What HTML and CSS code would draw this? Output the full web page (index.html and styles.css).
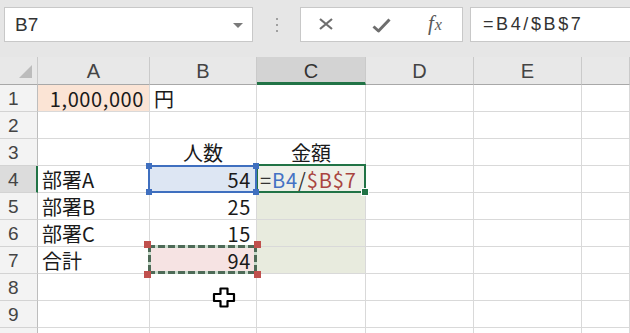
FILE: index.html
```html
<!DOCTYPE html>
<html lang="ja">
<head>
<meta charset="utf-8">
<link rel="stylesheet" href="styles.css">
</head>
<body>
<div class="toolbar">
  <div class="namebox"><span class="name">B7</span><span class="caret"></span></div>
  <div class="grip"><i></i><i></i><i></i></div>
  <div class="fbtns">
    <svg class="ic-x" width="16" height="12" viewBox="0 0 16 12"><path d="M2 1 L14 11 M14 1 L2 11" stroke="#6e6e6e" stroke-width="2.2" fill="none"/></svg>
    <svg class="ic-ok" width="19" height="15" viewBox="0 0 19 15"><path d="M1.5 8.5 L6.5 13 L17.5 1.5" stroke="#6e6e6e" stroke-width="3" fill="none" stroke-linejoin="round"/></svg>
    <span class="fx">f<span class="fx-x">x</span></span>
  </div>
  <div class="formula">=B4/$B$7</div>
</div>
<div class="sheet">
  <div class="c h corner"><span class="tri"></span></div>
  <div class="c h">A</div><div class="c h">B</div><div class="c h hsel">C</div><div class="c h">D</div><div class="c h">E</div><div class="c h"></div>

  <div class="c rh">1</div><div class="c r peach">1,000,000</div><div class="c">円</div><div class="c"></div><div class="c"></div><div class="c"></div><div class="c"></div>
  <div class="c rh">2</div><div class="c"></div><div class="c"></div><div class="c"></div><div class="c"></div><div class="c"></div><div class="c"></div>
  <div class="c rh">3</div><div class="c"></div><div class="c m">人数</div><div class="c m">金額</div><div class="c"></div><div class="c"></div><div class="c"></div>
  <div class="c rh rsel">4</div><div class="c">部署A</div>
  <div class="c r blue">54<span class="ref-blue"><i class="hd tl"></i><i class="hd tr"></i><i class="hd bl"></i><i class="hd br"></i></span></div>
  <div class="c tint active"><span class="f-eq">=</span><span class="f-b">B4</span><span class="f-eq">/</span><span class="f-r">$B$7</span><span class="act-box"><i class="fill"></i></span></div>
  <div class="c"></div><div class="c"></div><div class="c"></div>
  <div class="c rh">5</div><div class="c">部署B</div><div class="c r">25</div><div class="c tint"></div><div class="c"></div><div class="c"></div><div class="c"></div>
  <div class="c rh">6</div><div class="c">部署C</div><div class="c r">15</div><div class="c tint"></div><div class="c"></div><div class="c"></div><div class="c"></div>
  <div class="c rh">7</div><div class="c">合計</div>
  <div class="c r pink">94<span class="ants"><i class="hd rd tl"></i><i class="hd rd tr"></i><i class="hd rd bl"></i><i class="hd rd br"></i></span></div>
  <div class="c tint"></div><div class="c"></div><div class="c"></div><div class="c"></div>
  <div class="c rh">8</div><div class="c"></div><div class="c"></div><div class="c"></div><div class="c"></div><div class="c"></div><div class="c"></div>
  <div class="c rh">9</div><div class="c"></div><div class="c"></div><div class="c"></div><div class="c"></div><div class="c"></div><div class="c"></div>
  <div class="c rh"></div><div class="c"></div><div class="c"></div><div class="c"></div><div class="c"></div><div class="c"></div><div class="c"></div>

  <svg class="cursor" width="24" height="21" viewBox="0 0 24 21"><path d="M8.5 1.5 H15.5 V7 H22 V14 H15.5 V19.5 H8.5 V14 H2 V7 H8.5 Z" fill="#fff" stroke="#000" stroke-width="2.2" stroke-linejoin="round"/></svg>
</div>
</body>
</html>
```
FILE: styles.css
```css
html, body { margin: 0; padding: 0; }
body {
  font-family: "Noto Sans CJK JP", "Liberation Sans", sans-serif;
  background: #fff;
  overflow: hidden;
  width: 630px;
  height: 333px;
}
.toolbar {
  height: 57px;
  box-sizing: border-box;
  background: #e6e6e6;
  display: flex;
  align-items: flex-start;
  padding-top: 7px;
}
.namebox {
  margin-left: 4px;
  width: 249px;
  height: 35px;
  box-sizing: border-box;
  background: #fff;
  border: 1px solid #c8c8c8;
  display: flex;
  align-items: center;
  justify-content: space-between;
  padding: 0 9px 0 10px;
}
.name {
  font-family: "Liberation Sans", sans-serif;
  font-size: 19px;
  color: #333;
}
.caret {
  width: 0; height: 0;
  border-left: 5px solid transparent;
  border-right: 5px solid transparent;
  border-top: 5px solid #7a7a7a;
  margin-top: 2px;
}
.grip {
  width: 47px;
  height: 35px;
  display: flex;
  flex-direction: column;
  align-items: center;
  justify-content: center;
  gap: 4px;
}
.grip i { display: block; width: 2px; height: 2px; background: #a0a0a0; }
.fbtns {
  width: 163px;
  height: 35px;
  box-sizing: border-box;
  background: #fff;
  border: 1px solid #c8c8c8;
  display: flex;
  align-items: center;
  padding-left: 17px;
}
.ic-x { margin-top: -2px; }
.ic-ok { margin-left: 38px; margin-top: 2px; }
.fx {
  margin-left: 37px;
  font-family: "Liberation Serif", serif;
  font-style: italic;
  font-size: 21px;
  color: #5a5a5a;
  margin-top: -2px;
}
.fx-x { font-size: 16px; margin-left: 1px; }
.formula {
  margin-left: 7px;
  flex: 1;
  height: 35px;
  box-sizing: border-box;
  background: #fff;
  border: 1px solid #c8c8c8;
  border-right: none;
  font-family: "Liberation Sans", sans-serif;
  font-size: 18px;
  letter-spacing: 2.6px;
  color: #333;
  padding-left: 12px;
  line-height: 33px;
}
.sheet {
  display: grid;
  grid-template-columns: 38px 112px 107px 109px 108px 108px 1fr;
  grid-template-rows: 28px repeat(10, 27px);
  position: relative;
}
.c {
  box-sizing: border-box;
  border-right: 1px solid #d9d9d9;
  border-bottom: 1px solid #d9d9d9;
  font-size: 20px;
  line-height: 27px;
  padding: 0 4px;
  white-space: nowrap;
  position: relative;
  color: #1a1a1a;
}
.h {
  background: #e8e8e8;
  border-right: 1px solid #cacaca;
  border-bottom: 1px solid #a8a8a8;
  text-align: center;
  color: #444;
  line-height: 28px;
  font-family: "Liberation Sans", sans-serif;
}
.hsel {
  background: #d3d3d3;
  border-bottom: 3px solid #217346;
  color: #333;
}
.corner { position: relative; }
.tri {
  position: absolute;
  right: 5px;
  bottom: 6px;
  width: 0; height: 0;
  border-left: 13px solid transparent;
  border-bottom: 13px solid #bcbcbc;
}
.rh {
  background: #f3f3f3;
  border-right: 1px solid #bdbdbd;
  border-bottom: 1px solid #d3d3d3;
  color: #444;
  padding-left: 8px;
  font-family: "Liberation Sans", sans-serif;
  font-size: 19px;
}
.rsel {
  background: #dcdcdc;
  border-right: 2px solid #217346;
}
.r { text-align: right; padding-right: 5px; letter-spacing: 0.6px; }
.m { text-align: center; }
.peach { background: #fbe4d5; }
.blue { background: #dde6f3; }
.pink { background: #f6e3e3; }
.tint { background: #e8ebde; }
.active { background: #eef0e8; padding-left: 3px; letter-spacing: 0.9px; }
.f-eq { color: #333; }
.f-b { color: #4472c4; }
.f-r { color: #a9443f; }
.ref-blue {
  position: absolute;
  left: -2px; right: -1px; top: -1px; bottom: -1px;
  border: 2px solid #3f6fbf;
  z-index: 3;
}
.act-box {
  position: absolute;
  left: -1px; right: -1px; top: -2px; bottom: -1px;
  border: 2px solid #217346;
  z-index: 2;
}
.fill {
  position: absolute;
  right: -5px; bottom: -5px;
  width: 6px; height: 6px;
  background: #217346;
  border: 1px solid #fff;
}
.hd {
  position: absolute;
  width: 6px; height: 6px;
  background: #3f6fbf;
  z-index: 4;
}
.hd.tl { left: -4px; top: -4px; }
.hd.tr { right: -4px; top: -4px; }
.hd.bl { left: -4px; bottom: -4px; }
.hd.br { right: -4px; bottom: -4px; }
.hd.rd { background: #c0504d; width: 7px; height: 7px; }
.ants {
  position: absolute;
  left: -2px; right: -1px; top: -2px; bottom: -1px;
  z-index: 3;
  background:
    repeating-linear-gradient(90deg, #4e6a57 0 7px, #c9dccd 7px 10px) left top / 100% 3px no-repeat,
    repeating-linear-gradient(90deg, #4e6a57 0 7px, #c9dccd 7px 10px) left bottom / 100% 3px no-repeat,
    repeating-linear-gradient(180deg, #4e6a57 0 7px, #c9dccd 7px 10px) left top / 3px 100% no-repeat,
    repeating-linear-gradient(180deg, #4e6a57 0 7px, #c9dccd 7px 10px) right top / 3px 100% no-repeat;
}
.cursor {
  position: absolute;
  left: 212px;
  top: 230px;
  z-index: 10;
}
```
